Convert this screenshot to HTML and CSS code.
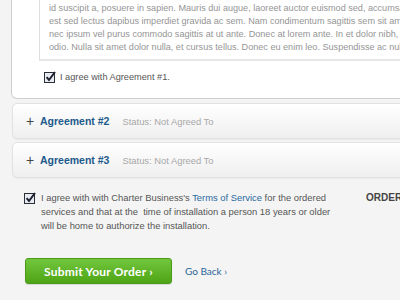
FILE: index.html
```html
<!DOCTYPE html>
<html>
<head>
<meta charset="utf-8">
<link rel="stylesheet" href="styles.css">
</head>
<body>
<div class="page">
  <div class="panel open">
    <div class="terms-box">
      <div class="line">id suscipit a, posuere in sapien. Mauris dui augue, laoreet auctor euismod sed, accumsan non lorem.</div>
      <div class="line">est sed lectus dapibus imperdiet gravida ac sem. Nam condimentum sagittis sem sit amet dictum.</div>
      <div class="line">nec ipsum vel purus commodo sagittis at ut ante. Donec at lorem ante. In et dolor nibh, sollicitudin</div>
      <div class="line">odio. Nulla sit amet dolor nulla, et cursus tellus. Donec eu enim leo. Suspendisse ac nulla in</div>
    </div>
    <label class="agree">
      <svg class="cb" width="12" height="12" viewBox="0 0 12 12"><rect x="0.5" y="1.5" width="10" height="10" fill="#e8ecf2" stroke="#2b2f36"/><path d="M2.6 6.2 L5 9 L11 1" fill="none" stroke="#1c2230" stroke-width="2"/></svg>
      <span>I agree with Agreement #1.</span>
    </label>
  </div>

  <div class="panel closed">
    <span class="plus">+</span>
    <span class="title">Agreement #2</span>
    <span class="status">Status: Not Agreed To</span>
  </div>
  <div class="panel closed">
    <span class="plus">+</span>
    <span class="title">Agreement #3</span>
    <span class="status">Status: Not Agreed To</span>
  </div>

  <div class="bottom">
    <div class="left">
      <div class="final">
        <svg class="cb" width="12" height="12" viewBox="0 0 12 12"><rect x="0.5" y="1.5" width="10" height="10" fill="#e8ecf2" stroke="#2b2f36"/><path d="M2.6 6.2 L5 9 L11 1" fill="none" stroke="#1c2230" stroke-width="2"/></svg>
        <p>I agree with with Charter Business's <a href="#">Terms of Service</a> for the ordered<br>services and that at the &nbsp;time of installation a person 18 years or older<br>will be home to authorize the installation.</p>
      </div>
      <div class="actions">
        <button class="submit">Submit Your Order ›</button>
        <a class="back" href="#">Go Back ›</a>
      </div>
    </div>
    <div class="summary">ORDER SUMMARY</div>
  </div>
</div>
</body>
</html>
```

FILE: styles.css
```css
html, body {
  margin: 0;
  padding: 0;
  overflow: hidden;
}
body {
  background: #f4f4f4;
  font-family: "Liberation Sans", Arial, sans-serif;
  width: 400px;
  height: 300px;
}
.page {
  width: 640px;
  padding-left: 11px;
}
.panel {
  background: #fff;
  box-sizing: border-box;
}
.open {
  border: 1px solid #cfcfcf;
  border-top: none;
  border-radius: 0 0 6px 6px;
  padding: 0 0 15px 27px;
}
.terms-box {
  border: 1px solid #dedede;
  border-top: none;
  border-bottom: 2px solid #e6e6e6;
  padding: 2px 0 5px 9px;
  font-size: 9.1px;
  line-height: 13px;
  color: #959595;
}
.line {
  white-space: nowrap;
  overflow: hidden;
}
.agree {
  display: flex;
  align-items: center;
  gap: 4px;
  margin: 10px 0 0 5px;
  font-size: 9.2px;
  color: #555;
  height: 12px;
}
.cb {
  display: block;
  flex: none;
}
.closed {
  margin: 4px 0 0 1px;
  height: 36px;
  border: 1px solid #e2e2e2;
  border-radius: 5px;
  background: linear-gradient(#ffffff, #efefef);
  box-shadow: 0 1px 1px rgba(0,0,0,0.04);
  display: flex;
  align-items: center;
  padding-left: 13px;
}
.closed + .closed {
  margin-top: 3px;
}
.plus {
  font-size: 14px;
  color: #444;
  width: 14px;
  margin-top: -1px;
}
.title {
  font-size: 10.5px;
  font-weight: bold;
  color: #1d5a8c;
  margin-right: 13px;
}
.status {
  font-size: 9.4px;
  color: #a8a8a8;
}
.bottom {
  display: flex;
  margin-top: 13px;
  padding-left: 13px;
}
.left {
  width: 342px;
  flex: none;
}
.final {
  display: flex;
  gap: 5px;
  align-items: flex-start;
}
.final .cb {
  margin-top: 1px;
}
.final p {
  margin: 0;
  font-size: 9.4px;
  line-height: 14px;
  color: #555;
}
.final a {
  color: #2a6aa0;
  text-decoration: none;
}
.actions {
  display: flex;
  align-items: center;
  gap: 13px;
  margin-top: 25px;
  padding-left: 1px;
}
.submit {
  width: 147px;
  height: 26px;
  border: 1px solid #4c9a1a;
  border-radius: 3px;
  background: linear-gradient(#72c63e, #4ea514);
  color: #fff;
  font-family: Lato, "Liberation Sans", sans-serif;
  font-weight: bold;
  font-size: 12px;
  letter-spacing: 0.2px;
  padding: 0;
  box-shadow: 0 1px 1px rgba(0,0,0,0.12);
}
.back {
  font-family: Lato, "Liberation Sans", sans-serif;
  font-size: 10px;
  color: #2a6496;
  text-decoration: none;
}
.summary {
  font-size: 10px;
  font-weight: bold;
  color: #444;
  line-height: 14px;
  white-space: nowrap;
}
```
